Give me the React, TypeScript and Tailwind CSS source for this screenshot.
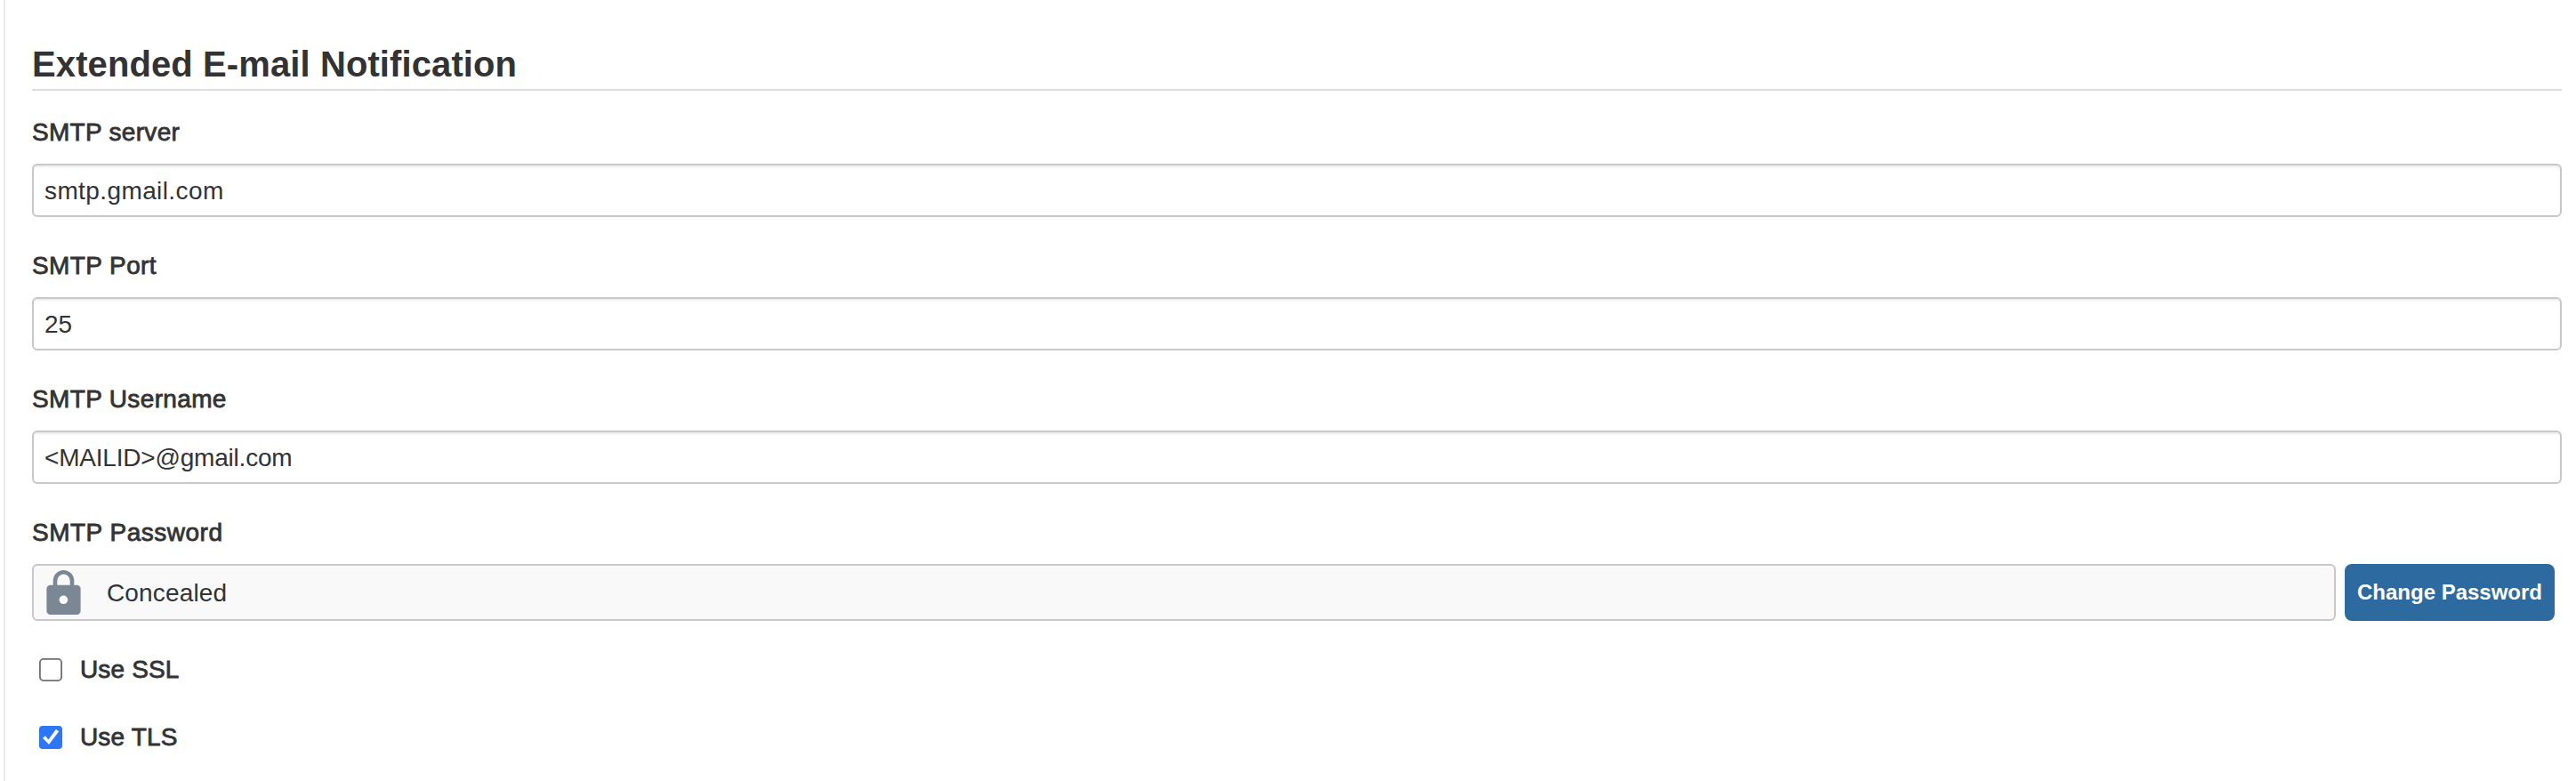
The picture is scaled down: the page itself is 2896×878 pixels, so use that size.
import { useState } from "react";

const labelText =
  "text-[28px] leading-10 text-[#333] [-webkit-text-stroke:0.8px_#333] whitespace-nowrap";

function TextField({
  label,
  initial,
  spacing,
  labelSpacing,
}: {
  label: string;
  initial: string;
  spacing: string;
  labelSpacing: string;
}) {
  const [value, setValue] = useState(initial);
  return (
    <label className="mb-[34px] flex flex-col gap-[15px]">
      <span className={`pt-px ${labelText} ${labelSpacing}`}>{label}</span>
      <input
        className={`h-[60px] w-full rounded-md border-2 border-[#c8c8c8] bg-white px-3 pt-0.5 text-[28px] text-[#333] shadow-[inset_0_2px_2px_rgba(0,0,0,0.075)] outline-none ${spacing}`}
        value={value}
        onChange={(e) => setValue(e.target.value)}
      />
    </label>
  );
}

function CheckField({ label, initial }: { label: string; initial: boolean }) {
  const [checked, setChecked] = useState(initial);
  return (
    <label className="relative flex h-10 items-center">
      <input
        type="checkbox"
        className="sr-only"
        checked={checked}
        onChange={() => setChecked(!checked)}
      />
      <svg className="ml-2 size-[26px] shrink-0" viewBox="0 0 26 26" fill="none">
        {checked ? (
          <>
            <rect width="26" height="26" rx="4" fill="#2b76f9" />
            <path d="M4 13.800L7 11.200L10.400 15.400L19 3.800L22.200 6.200L11 21Z" fill="#fff" />
          </>
        ) : (
          <rect x="0.9" y="0.9" width="24.2" height="24.2" rx="4" fill="#fff" stroke="#707070" strokeWidth="1.8" />
        )}
      </svg>
      <span className={`ml-5 tracking-[0.15px] ${labelText}`}>{label}</span>
    </label>
  );
}

function LockIcon() {
  return (
    <svg className="h-[50px] w-[39px] shrink-0" viewBox="0 0 39 50">
      <path d="M10 18V12A9.500 9.700 0 0 1 29 12V18" fill="none" stroke="#7b8794" strokeWidth="4.6" />
      <rect x="0.4" y="16.700" width="38.200" height="33.300" rx="4.200" fill="#7b8794" />
      <circle cx="19.400" cy="33.300" r="4.800" fill="#fff" />
    </svg>
  );
}

export default function App() {
  return (
    <main className="flex h-[878px] w-full bg-white pl-1 font-['Liberation_Sans',Arial,sans-serif]">
      <section className="flex flex-1 flex-col border-l-2 border-[#e9edf2] pt-12 pr-4 pl-[30px]">
        <h2 className="mb-[26px] border-b-2 border-[#dedede] pb-1 text-[40px] leading-[48px] font-bold tracking-[0.1px] text-[#333]">
          Extended E-mail Notification
        </h2>
        <TextField label="SMTP server" initial="smtp.gmail.com" labelSpacing="tracking-[0.3px]" spacing="tracking-[0.4px]" />
        <TextField label="SMTP Port" initial="25" labelSpacing="tracking-[0.4px]" spacing="tracking-normal" />
        <TextField
          label="SMTP Username"
          initial="<MAILID>@gmail.com"
          labelSpacing="tracking-[0.35px]"
          spacing="tracking-[-0.2px]"
        />
        <span className={`mb-[15px] pt-px tracking-[0.5px] ${labelText}`}>SMTP Password</span>
        <div className="flex h-16 gap-2.5 pr-2">
          <div className="flex flex-1 items-center rounded-md border-2 border-[#c8c8c8] bg-[#f9f9f9] pl-3.5">
            <LockIcon />
            <span className="ml-[29px] pt-px text-[28px] leading-10 tracking-[0.15px] text-[#333]">Concealed</span>
          </div>
          <button
            type="button"
            className="w-[236px] rounded-lg bg-[#2d6a9f] text-center text-[24px] leading-8 font-bold whitespace-nowrap text-white"
          >
            Change Password
          </button>
        </div>
        <div className="mt-[35px] flex flex-col gap-9">
          <CheckField label="Use SSL" initial={false} />
          <CheckField label="Use TLS" initial={true} />
        </div>
      </section>
    </main>
  );
}
